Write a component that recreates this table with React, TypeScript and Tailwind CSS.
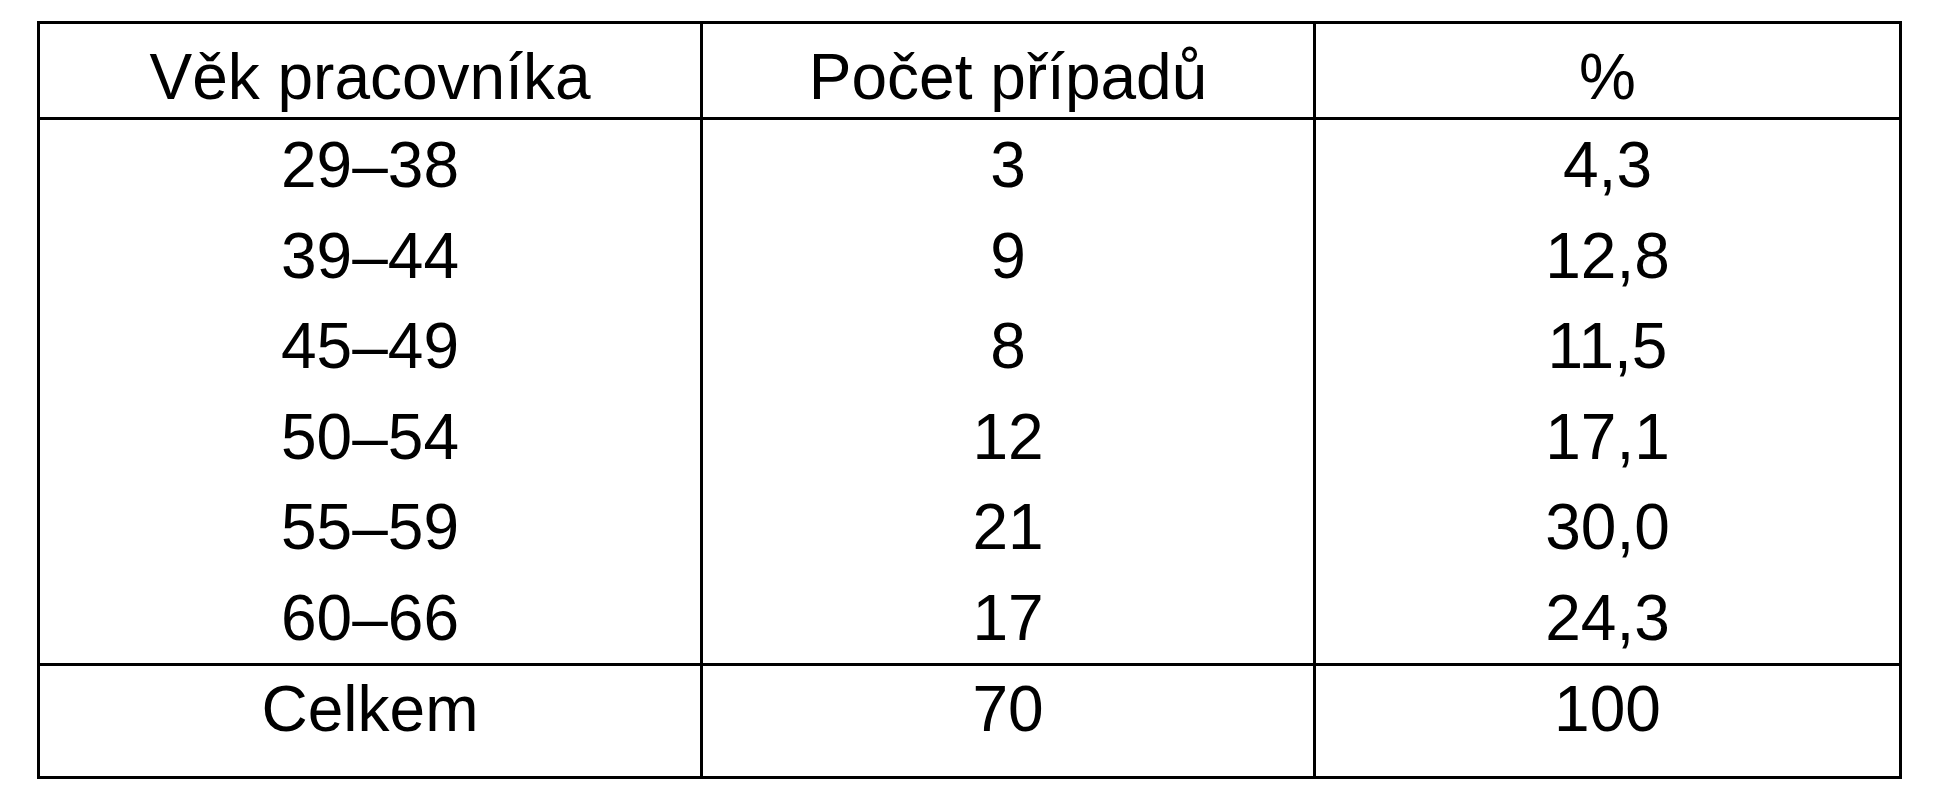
import React from 'react';

type Row = { age: string; count: string; pct: string };

const rows: Row[] = [
  { age: '29–38', count: '3', pct: '4,3' },
  { age: '39–44', count: '9', pct: '12,8' },
  { age: '45–49', count: '8', pct: '11,5' },
  { age: '50–54', count: '12', pct: '17,1' },
  { age: '55–59', count: '21', pct: '30,0' },
  { age: '60–66', count: '17', pct: '24,3' },
];

// šířky sloupců bez svislých čar
const cols = 'grid grid-cols-[660px_613px_586px]';

function Cells({ values, className }: { values: string[]; className: string }) {
  return (
    <>
      {values.map((v, i) => (
        <div
          key={i}
          className={`flex items-center justify-center ${className} ${i > 0 ? 'border-l-[3px] border-black' : ''}`}
        >
          {v}
        </div>
      ))}
    </>
  );
}

export default function App() {
  return (
    <div className="min-h-screen bg-white pl-[37px] pt-[21px] font-['Liberation_Sans',Arial,sans-serif] text-[64px] leading-none text-black">
      <div className="w-[1865px] border-[3px] border-black">
        {/* hlavička */}
        <div className={`${cols} h-[96px] border-b-[3px] border-black`}>
          <Cells values={['Věk pracovníka', 'Počet případů', '%']} className="pt-3" />
        </div>

        {/* data */}
        <div className="border-b-[3px] border-black">
          {rows.map((r) => (
            <div key={r.age} className={`${cols} h-[90.5px]`}>
              <Cells values={[r.age, r.count, r.pct]} className="" />
            </div>
          ))}
        </div>

        {/* součet */}
        <div className={`${cols} h-[110px]`}>
          <Cells values={['Celkem', '70', '100']} className="pb-6" />
        </div>
      </div>
    </div>
  );
}
